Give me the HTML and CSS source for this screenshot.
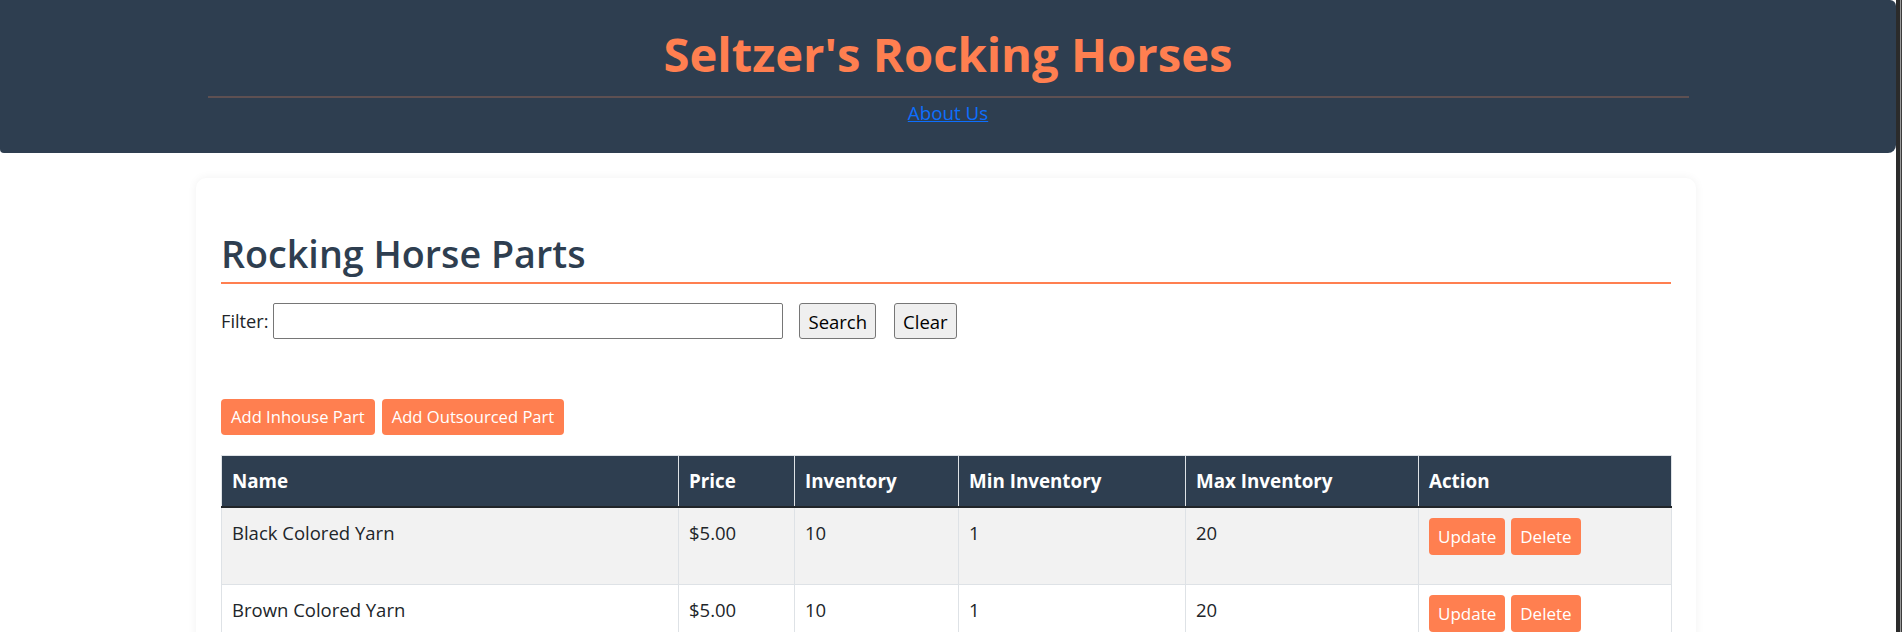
FILE: index.html
```html
<!DOCTYPE html>
<html lang="en">
<head>
<meta charset="utf-8">
<title>Seltzer's Rocking Horses</title>
<link rel="stylesheet" href="styles.css">
</head>
<body>
<div class="window">
  <div class="page">
    <header class="site-header">
      <h1 class="site-title">Seltzer's Rocking Horses</h1>
      <div class="header-rule"></div>
      <nav class="site-nav"><a href="#">About Us</a></nav>
    </header>

    <main class="card">
      <h2 class="section-title">Rocking Horse Parts</h2>

      <form class="filter-row">
        <label class="filter-label" for="kw">Filter:</label>
        <input class="filter-input" id="kw" type="text">
        <button class="plain-btn search-btn" type="button">Search</button>
        <button class="plain-btn" type="button">Clear</button>
      </form>

      <div class="add-row">
        <a class="btn btn-add" href="#">Add Inhouse Part</a>
        <a class="btn btn-add" href="#">Add Outsourced Part</a>
      </div>

      <table class="parts-table">
        <colgroup>
          <col class="c-name"><col class="c-price"><col class="c-inv"><col class="c-min"><col class="c-max"><col class="c-act">
        </colgroup>
        <thead>
          <tr><th>Name</th><th>Price</th><th>Inventory</th><th>Min Inventory</th><th>Max Inventory</th><th>Action</th></tr>
        </thead>
        <tbody>
          <tr class="odd">
            <td>Black Colored Yarn</td><td>$5.00</td><td>10</td><td>1</td><td>20</td>
            <td><div class="actions"><a class="btn btn-row" href="#">Update</a><a class="btn btn-row" href="#">Delete</a></div></td>
          </tr>
          <tr>
            <td>Brown Colored Yarn</td><td>$5.00</td><td>10</td><td>1</td><td>20</td>
            <td><div class="actions"><a class="btn btn-row" href="#">Update</a><a class="btn btn-row" href="#">Delete</a></div></td>
          </tr>
        </tbody>
      </table>
    </main>
  </div>
  <div class="frame-edge"></div>
</div>
</body>
</html>
```

FILE: styles.css
```css
html, body {
  margin: 0;
  padding: 0;
  height: 100%;
  overflow: hidden;
  background: #ffffff;
}

body {
  font-family: "Open Sans", "Noto Sans", sans-serif;
  color: #212529;
  font-size: 18.5px;
  line-height: 30px;
}

.window {
  display: flex;
  min-height: 100%;
}

.page {
  flex: 1;
  min-width: 0;
}

.frame-edge {
  width: 6px;
  flex: none;
  background: linear-gradient(to right, #2b2b2b 0 4px, #9a9a9a 4px 5px, #3c3c3c 5px 6px);
}

/* Header */
.site-header {
  background: #2e3e50;
  border-radius: 0 6px 8px 4px;
  padding: 26px 0 25px;
  text-align: center;
}

.site-title {
  margin: 0;
  font-size: 47.2px;
  line-height: 57px;
  font-weight: 700;
  color: #ff7f50;
}

.header-rule {
  width: 1481px;
  height: 2px;
  margin: 13px auto 0;
  background: #5e5052;
}

.site-nav {
  font-size: 18.8px;
  line-height: 30px;
}

.site-nav a {
  color: #0d6efd;
  text-decoration: underline;
}

/* Card */
.card {
  width: 1450px;
  margin: 25px auto 0;
  padding: 25px;
  background: #fff;
  border-radius: 10px;
  box-shadow: 0 0 10px rgba(0, 0, 0, 0.06);
  transform: translateX(-2px);
}

.section-title {
  margin: 27px 0 19px;
  padding-bottom: 4px;
  border-bottom: 2px solid #ff7f50;
  font-size: 37.7px;
  line-height: 48px;
  font-weight: 600;
  color: #2e3e50;
}

/* Filter */
.filter-row {
  display: flex;
  align-items: center;
  height: 36px;
  margin: 0;
}

.filter-label {
  font-size: 18.2px;
  margin-right: 5px;
}

.filter-input {
  width: 510px;
  height: 36px;
  box-sizing: border-box;
  border: 1px solid #767676;
  border-radius: 2px;
  margin: 0 16px 0 0;
  padding: 1px 4px;
  font: inherit;
}

.plain-btn {
  height: 36px;
  box-sizing: border-box;
  padding: 0 8px;
  background: #efefef;
  border: 1px solid #767676;
  border-radius: 3px;
  font-family: inherit;
  font-size: 18.5px;
  color: #000;
}

.search-btn {
  margin-right: 18px;
}

/* Add buttons */
.add-row {
  display: flex;
  gap: 7px;
  margin-top: 60px;
}

.btn {
  display: inline-block;
  background: #ff7f50;
  color: #fff;
  text-decoration: none;
  border-radius: 4px;
}

.btn-add {
  height: 36px;
  line-height: 36px;
  padding: 0 10px;
  font-size: 16.6px;
}

/* Table */
.parts-table {
  width: 1450px;
  margin-top: 20px;
  border-collapse: collapse;
  table-layout: fixed;
}

.c-name { width: 457px; }
.c-price { width: 116px; }
.c-inv { width: 164px; }
.c-min { width: 227px; }
.c-max { width: 233px; }
.c-act { width: 253px; }

.parts-table th,
.parts-table td {
  border: 1px solid #dee2e6;
  padding: 10px 10px;
  text-align: left;
  vertical-align: top;
  line-height: 30px;
}

.parts-table th {
  background: #2e3e50;
  color: #fff;
  font-weight: 700;
  font-size: 18.8px;
  border-bottom: 2px solid #212529;
}

.parts-table tr.odd td {
  background: #f2f2f2;
}

.actions {
  display: flex;
  gap: 6px;
  margin-bottom: 19px;
}

.btn-row {
  height: 37px;
  line-height: 37px;
  padding: 0 9px;
  font-size: 17px;
}
```
